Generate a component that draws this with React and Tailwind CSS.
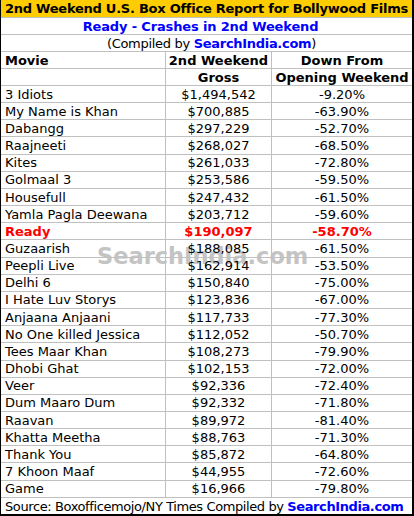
import React from "react";

const rows = [
  ["3 Idiots", "$1,494,542", "-9.20%"],
  ["My Name is Khan", "$700,885", "-63.90%"],
  ["Dabangg", "$297,229", "-52.70%"],
  ["Raajneeti", "$268,027", "-68.50%"],
  ["Kites", "$261,033", "-72.80%"],
  ["Golmaal 3", "$253,586", "-59.50%"],
  ["Housefull", "$247,432", "-61.50%"],
  ["Yamla Pagla Deewana", "$203,712", "-59.60%"],
  ["Ready", "$190,097", "-58.70%", true],
  ["Guzaarish", "$188,085", "-61.50%"],
  ["Peepli Live", "$162,914", "-53.50%"],
  ["Delhi 6", "$150,840", "-75.00%"],
  ["I Hate Luv Storys", "$123,836", "-67.00%"],
  ["Anjaana Anjaani", "$117,733", "-77.30%"],
  ["No One killed Jessica", "$112,052", "-50.70%"],
  ["Tees Maar Khan", "$108,273", "-79.90%"],
  ["Dhobi Ghat", "$102,153", "-72.00%"],
  ["Veer", "$92,336", "-72.40%"],
  ["Dum Maaro Dum", "$92,332", "-71.80%"],
  ["Raavan", "$89,972", "-81.40%"],
  ["Khatta Meetha", "$88,763", "-71.30%"],
  ["Thank You", "$85,872", "-64.80%"],
  ["7 Khoon Maaf", "$44,955", "-72.60%"],
  ["Game", "$16,966", "-79.80%"],
];

const font = { fontFamily: '"DejaVu Sans", Verdana, sans-serif' };

export default function App() {
  return (
    <div
      className="relative w-[414px] h-[516px] bg-white text-black text-[13px] leading-none border-l border-r-2 border-b-2 border-black overflow-hidden"
      style={font}
    >
      {/* watermark sits under the table text */}
      <div className="absolute left-[96px] top-[245px] text-[22.5px] font-bold text-[#c4c4c4] whitespace-nowrap">
        SearchIndia.com
      </div>

      <div className="relative">
        {/* title */}
        <div className="h-[18px] bg-[#ffcc00] border-b border-[#c0c0c0] flex items-center justify-center font-bold whitespace-nowrap tracking-[-0.25px]">
          2nd Weekend U.S. Box Office Report for Bollywood Films
        </div>
        <div className="h-[17px] border-b border-[#c0c0c0] flex items-center justify-center pr-[12px] font-bold text-[#0000ff] tracking-[-0.15px]">
          Ready - Crashes in 2nd Weekend
        </div>
        <div className="h-[17px] border-b border-[#c0c0c0] flex items-center justify-center pl-[10px] tracking-[-0.3px]">
          (Compiled by&nbsp;<span className="font-bold text-[#0000ff]">SearchIndia.com</span>)
        </div>

        {/* header */}
        <div className="h-[17px] border-b border-[#c0c0c0] flex font-bold">
          <div className="w-[165px] pl-[4px] flex items-center border-r border-[#c0c0c0]">Movie</div>
          <div className="w-[106px] flex items-center justify-center border-r border-[#c0c0c0]">2nd Weekend</div>
          <div className="flex-1 flex items-center justify-center">Down From</div>
        </div>
        <div className="h-[17px] border-b border-[#c0c0c0] flex font-bold">
          <div className="w-[165px] border-r border-[#c0c0c0]"></div>
          <div className="w-[106px] flex items-center justify-center border-r border-[#c0c0c0]">Gross</div>
          <div className="flex-1 flex items-center justify-center">Opening Weekend</div>
        </div>

        {rows.map(([name, gross, down, hi]) => (
          <div
            key={name}
            className={`h-[17.17px] border-b border-[#c0c0c0] flex ${hi ? "font-bold text-[#ff0000]" : ""}`}
          >
            <div className="w-[165px] pl-[4px] flex items-center border-r border-[#c0c0c0] whitespace-nowrap">{name}</div>
            <div className="w-[106px] flex items-center justify-center border-r border-[#c0c0c0]">{gross}</div>
            <div className="flex-1 flex items-center justify-center">{down}</div>
          </div>
        ))}

        <div className="h-[17px] flex items-center pl-[4px] whitespace-nowrap tracking-[-0.4px]">
          Source: Boxofficemojo/NY Times Compiled by&nbsp;
          <span className="font-bold text-[#0000ff]">SearchIndia.com</span>
        </div>
      </div>
    </div>
  );
}
